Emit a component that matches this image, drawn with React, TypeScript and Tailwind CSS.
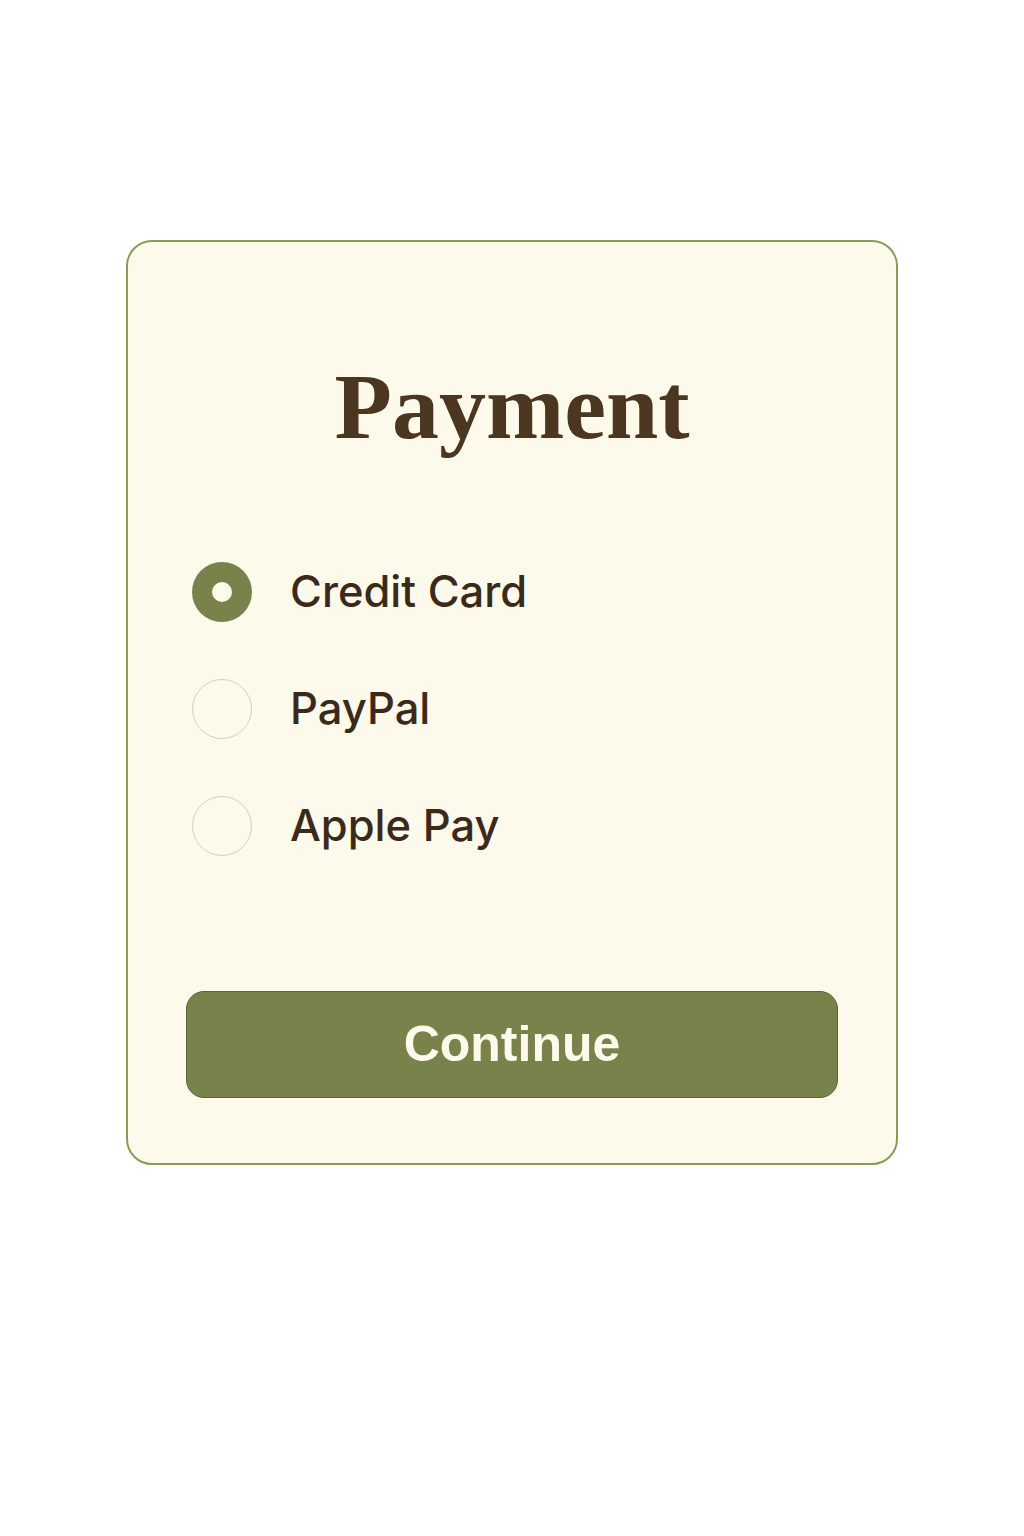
import React, { useState } from 'react'

const methods = ['Credit Card', 'PayPal', 'Apple Pay']

export default function App() {
    const [selected, setSelected] = useState('Credit Card')

    return (
        <div className="min-h-[1536px] w-full bg-white flex flex-col items-center pt-[240px]">
            <div className="w-[772px] h-[925px] rounded-[26px] border-2 border-[#8a9a58] bg-[#fdf9eb] flex flex-col px-[58px] pt-[117px]">
                <h1 className="text-center text-[94px] leading-none font-bold text-[#4b3620] font-['Liberation_Serif',serif]">Payment</h1>
                <div className="mt-[109px] flex flex-col gap-[57px] pl-[6px]">
                    {methods.map((m) => (
                        <label key={m} className="flex items-center gap-[38px] cursor-pointer" onClick={() => setSelected(m)}>
                            {selected === m ? (
                                <span className="w-[60px] h-[60px] rounded-full bg-[#78824a] flex items-center justify-center">
                                    <span className="w-[20px] h-[20px] rounded-full bg-[#fdf9eb]"></span>
                                </span>
                            ) : (
                                <span className="w-[60px] h-[60px] rounded-full border-[1.5px] border-[#d6cfbc]"></span>
                            )}
                            <span className="text-[43.5px] leading-none font-medium text-[#3b2a1a] font-['Inter',sans-serif]">{m}</span>
                        </label>
                    ))}
                </div>
                <button className="mt-[135px] h-[107px] w-full rounded-[18px] bg-[#78824a] border border-[#5a6430] text-[#fdf9eb] text-[50px] font-bold font-['Liberation_Sans',sans-serif]">
                    Continue
                </button>
            </div>
        </div>
    )
}
